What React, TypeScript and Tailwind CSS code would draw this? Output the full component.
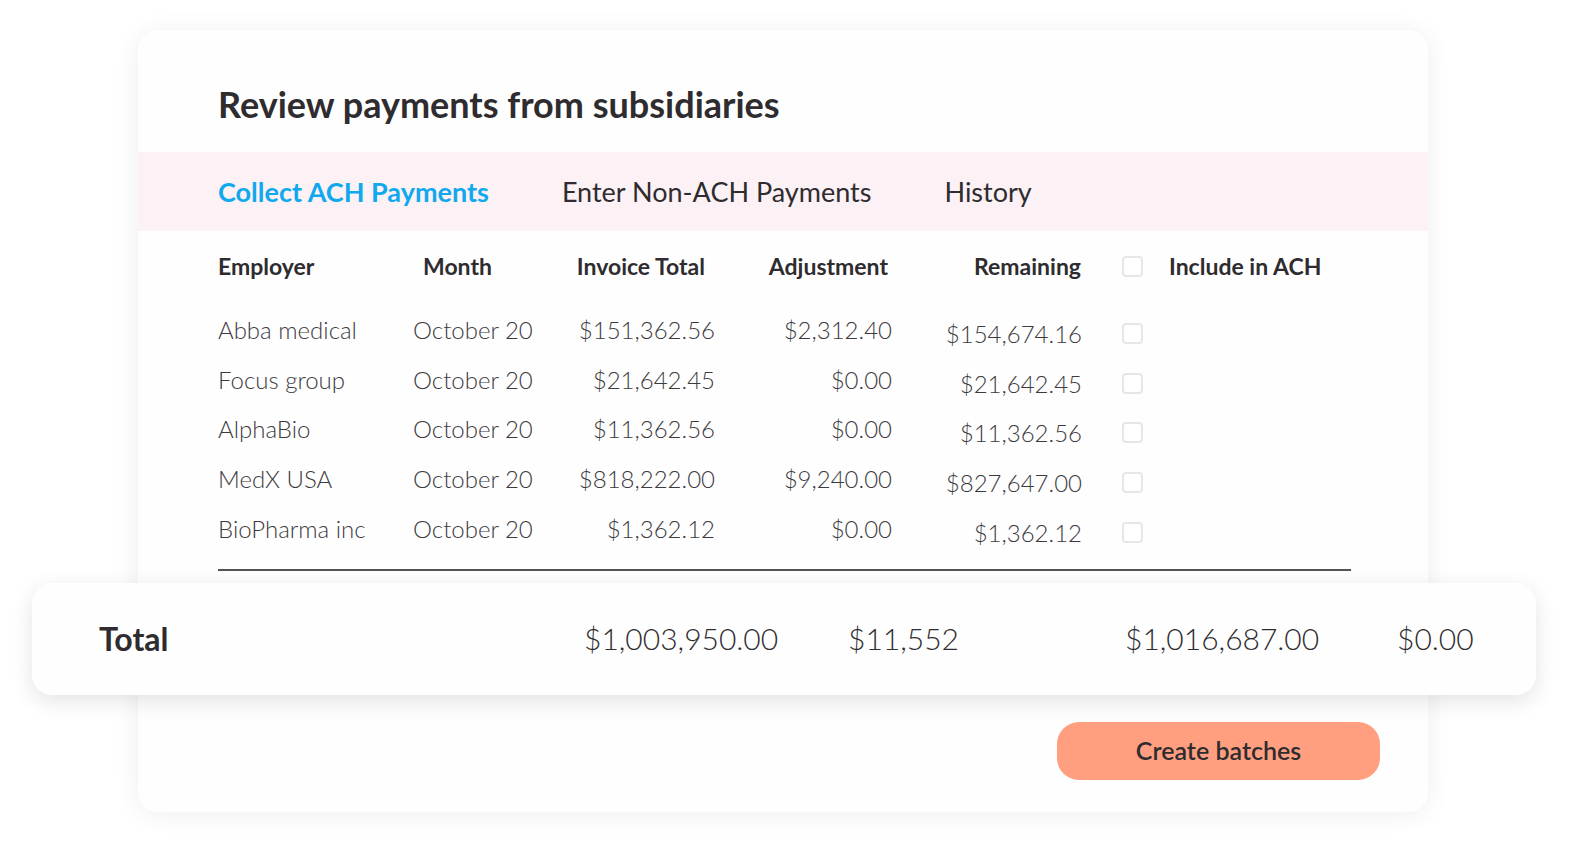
import { useState } from 'react';

type Row = {
  employer: string;
  month: string;
  invoice: string;
  adjustment: string;
  remaining: string;
};

const rows: Row[] = [
  { employer: 'Abba medical', month: 'October 20', invoice: '$151,362.56', adjustment: '$2,312.40', remaining: '$154,674.16' },
  { employer: 'Focus group', month: 'October 20', invoice: '$21,642.45', adjustment: '$0.00', remaining: '$21,642.45' },
  { employer: 'AlphaBio', month: 'October 20', invoice: '$11,362.56', adjustment: '$0.00', remaining: '$11,362.56' },
  { employer: 'MedX USA', month: 'October 20', invoice: '$818,222.00', adjustment: '$9,240.00', remaining: '$827,647.00' },
  { employer: 'BioPharma inc', month: 'October 20', invoice: '$1,362.12', adjustment: '$0.00', remaining: '$1,362.12' },
];

const tabs = ['Collect ACH Payments', 'Enter Non-ACH Payments', 'History'];

function Checkbox({ checked, onChange }: { checked: boolean; onChange: () => void }) {
  return (
    <button
      onClick={onChange}
      className={`w-[21px] h-[21px] shrink-0 rounded-[4px] border-2 ${
        checked ? 'border-[#10a9ee] bg-[#10a9ee]' : 'border-[#e6e6e6] bg-white'
      }`}
    />
  );
}

export default function App() {
  const [activeTab, setActiveTab] = useState(0);
  const [selected, setSelected] = useState<boolean[]>(rows.map(() => false));
  const allSelected = selected.every(Boolean);

  const toggleAll = () => setSelected(rows.map(() => !allSelected));
  const toggle = (i: number) =>
    setSelected((prev) => prev.map((v, idx) => (idx === i ? !v : v)));

  return (
    <div className="min-h-screen bg-white pt-[30px] pl-[138px] font-['Lato','Noto_Sans',sans-serif] text-[#2f2c30]">
      <div className="w-[1290px] rounded-[20px] bg-[#fefefe] shadow-[0_2px_26px_rgba(0,0,0,0.07)] pt-[52px] pb-[32px]">
        <h1 className="pl-[80px] text-[36px] leading-[44px] font-bold">
          Review payments from subsidiaries
        </h1>

        {/* tabs */}
        <div className="mt-[26px] h-[79px] bg-[#fcf1f4] flex items-center pl-[80px] gap-[73px]">
          {tabs.map((t, i) => (
            <button
              key={t}
              onClick={() => setActiveTab(i)}
              className={`text-[27px] leading-none ${
                activeTab === i ? 'text-[#10a9ee] font-bold' : 'text-[#2f2c30] font-normal'
              }`}
            >
              {t}
            </button>
          ))}
        </div>

        {/* table */}
        <div className="pl-[80px] pt-[15px]">
          <div className="flex items-center h-[40px] text-[23px] font-bold">
            <div className="w-[195px]">Employer</div>
            <div className="w-[127px] pl-[10px]">Month</div>
            <div className="w-[175px] text-right pr-[10px]">Invoice Total</div>
            <div className="w-[177px] text-right pr-[4px]">Adjustment</div>
            <div className="w-[190px] text-right pr-[1px]">Remaining</div>
            <div className="ml-[40px]">
              <Checkbox checked={allSelected} onChange={toggleAll} />
            </div>
            <div className="ml-[26px]">Include in ACH</div>
          </div>

          <div className="mt-[19px]">
            {rows.map((r, i) => (
              <div key={r.employer} className="flex items-center h-[49.75px] text-[24px] font-light text-[#3d3a3e] whitespace-nowrap">
                <div className="w-[195px]">{r.employer}</div>
                <div className="w-[127px]">{r.month}</div>
                <div className="w-[175px] text-right">{r.invoice}</div>
                <div className="w-[177px] text-right">{r.adjustment}</div>
                <div className="w-[190px] text-right pt-[8px]">{r.remaining}</div>
                <div className="ml-[40px] pt-[6px]">
                  <Checkbox checked={selected[i]} onChange={() => toggle(i)} />
                </div>
              </div>
            ))}
          </div>

          <div className="mt-[15px] mr-[77px] h-[2px] bg-[#555356]" />
        </div>

        {/* totals */}
        <div className="mt-[12px] ml-[-106px] mr-[-108px] h-[112px] rounded-[20px] bg-[#fefefe] shadow-[0_6px_22px_rgba(0,0,0,0.11)] flex items-center pl-[67px] text-[30px] whitespace-nowrap">
          <div className="w-[485px] text-[32px] font-bold">Total</div>
          <div className="w-[264px] font-light">$1,003,950.00</div>
          <div className="w-[277px] font-light">$11,552</div>
          <div className="w-[272px] font-light">$1,016,687.00</div>
          <div className="font-light">$0.00</div>
        </div>

        {/* action */}
        <div className="mt-[27px] flex justify-end pr-[48px]">
          <button className="w-[323px] h-[58px] rounded-[22px] bg-[#ff9f80] text-[25px] font-semibold text-[#2f2c30]">
            Create batches
          </button>
        </div>
      </div>
    </div>
  );
}
